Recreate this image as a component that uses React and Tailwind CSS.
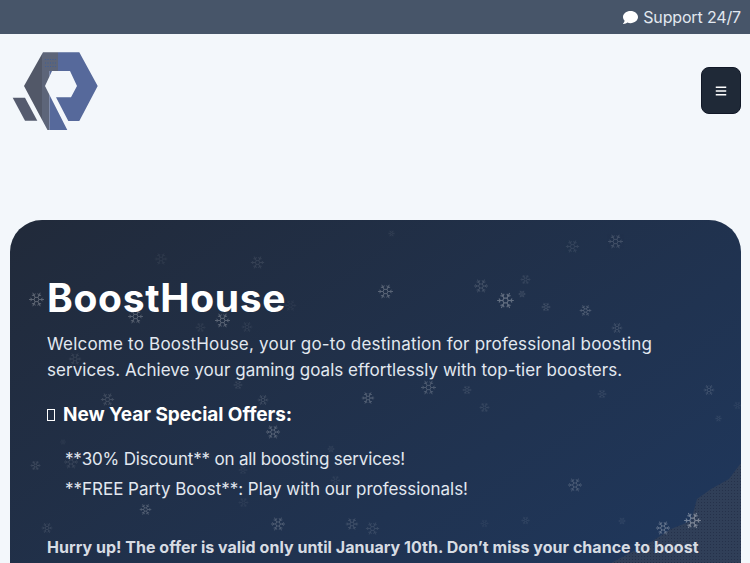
import React from "react";
import { Snowflake } from "lucide-react";
import { FaComment, FaBars } from "react-icons/fa";

const flakes = [
  [36,299,17,0.28],[135,316,17,0.24],[222,320,17,0.26],[75,359,14,0.1],[161,259,14,0.06],[257,262,15,0.1],
  [238,385,10,0.12],[200,327,11,0.08],[247,327,12,0.08],[290,305,13,0.05],[391,233,7,0.1],[385,291,17,0.26],
  [481,286,16,0.16],[505,300,19,0.3],[522,294,8,0.18],[546,307,10,0.18],[585,310,13,0.24],[617,328,12,0.16],
  [572,246,15,0.1],[615,241,17,0.15],[525,279,11,0.12],[428,387,17,0.2],[467,390,10,0.14],[484,407,11,0.12],
  [602,394,10,0.12],[709,390,12,0.16],[368,398,14,0.25],[107,399,15,0.16],[273,432,16,0.25],[63,442,6,0.08],
  [35,465,11,0.16],[71,462,16,0.1],[145,509,13,0.26],[278,524,16,0.22],[47,528,12,0.12],[352,524,14,0.16],
  [372,528,15,0.12],[331,449,8,0.1],[243,470,10,0.07],[243,502,11,0.07],[335,480,11,0.08],[575,485,16,0.2],
  [663,528,16,0.32],[692,520,19,0.38],[525,520,9,0.1],[622,521,8,0.1],[718,418,7,0.12],[737,405,9,0.08],
  [484,523,9,0.07],[263,400,12,0.16],[427,486,5,0.05],
];

function Logo() {
  return (
    <svg width="86" height="80" viewBox="12 52 86 80" className="block">
      <defs>
        <clipPath id="dark"><rect x="0" y="40" width="42" height="100" /></clipPath>
        <clipPath id="band"><path d="M42 40H58V71H49.5V140H42Z" /></clipPath>
        <clipPath id="blue"><path d="M58 40H110V140H49.5V71H58Z" /></clipPath>
      </defs>
      <polygon points="12.7,97.7 25,97.7 37.3,120.7 25,120.7" fill="#555b6e" />
      {["dark", "band", "blue"].map((id, i) => (
        <polygon
          key={id}
          clipPath={`url(#${id})`}
          fill={["#525868", "#5d6579", "#56699b"][i]}
          points="43,52.3 79.3,52.3 97.7,86 79.3,121 68.3,121 56,97.3 71,97.3 77,86 70,71 52,71 45,86 67.3,130 47.5,130 24,86"
        />
      ))}
      <g fill="#3f5f98">
        {[59, 62.5, 66].map((y) => [45, 47.5, 50, 52.5, 55].map((x) => <rect key={`${x}-${y}`} x={x} y={y} width="1" height="1" />))}
      </g>
    </svg>
  );
}

export default function App() {
  return (
    <div className="h-[563px] overflow-hidden bg-[#f3f7fb] font-['Inter','Liberation_Sans',sans-serif]">
      <div className="flex h-[34px] items-center justify-end gap-[5px] bg-[#475569] pr-[9px] text-[16px] text-[#e2e8f0]">
        <FaComment className="text-[15px] text-white" />
        <span className="tracking-[-0.15px]">Support 24/7</span>
      </div>
      <nav className="flex items-start justify-between pl-3 pr-[9px] pt-[18px] pb-[18px]">
        <Logo />
        <button className="mt-[15px] flex h-[47px] w-[40px] items-center justify-center rounded-lg border border-[#111827] bg-[#1f2937] text-white">
          <FaBars className="text-[12px]" />
        </button>
      </nav>
      <section className="relative mx-[9px] ml-[10px] mt-[70px] h-[500px] overflow-hidden rounded-t-[32px] bg-gradient-to-br from-[#212a3a] to-[#1e3a64] pl-[37px] pr-[37px] pt-[53px]">
        <svg className="absolute bottom-[157px] right-0" width="130" height="100" viewBox="0 0 130 100">
          <defs>
            <pattern id="dots" width="3" height="3" patternUnits="userSpaceOnUse">
              <rect width="3" height="3" fill="#303f58" />
              <rect width="1" height="1" fill="#25314a" />
            </pattern>
          </defs>
          <path d="M0 100 L40 79 L60 66 L80 58 L86 36 L100 26 L118 16 L130 0 V100Z" fill="url(#dots)" />
        </svg>
        {flakes.map(([x, y, s, o], i) => (
          <Snowflake
            key={i}
            size={s}
            strokeWidth={1.4}
            className="absolute text-white"
            style={{ left: x - 10 - s / 2, top: y - 220 - s / 2, opacity: o }}
          />
        ))}
        <div className="relative">
          <h1 className="text-[39px] font-bold leading-[50px] tracking-[0.7px] text-white">BoostHouse</h1>
          <p className="mt-[8px] text-[17px] leading-[26.4px] text-[#e2e8f0]">
            <span className="block whitespace-nowrap tracking-[0.21px]">Welcome to BoostHouse, your go-to destination for professional boosting</span>
            <span className="block whitespace-nowrap tracking-[0.04px]">services. Achieve your gaming goals effortlessly with top-tier boosters.</span>
          </p>
          <h2 className="mt-[18px] flex items-center text-[19px] font-bold leading-[26px] tracking-[-0.04px] text-white">
            <span className="mr-[8px] inline-block h-[12px] w-[8px] border-[1.5px] border-white" />
            New Year Special Offers:
          </h2>
          <ul className="mt-[16px] pl-[18px] text-[17px] text-[#e2e8f0]">
            <li className="whitespace-nowrap leading-[30px] tracking-[-0.18px]">**30% Discount** on all boosting services!</li>
            <li className="whitespace-nowrap leading-[30px] tracking-[-0.02px]">**FREE Party Boost**: Play with our professionals!</li>
          </ul>
          <p className="mt-[30px] whitespace-nowrap text-[16px] font-bold leading-[26px] tracking-[0.03px] text-[#d7dce3]">
            Hurry up! The offer is valid only until January 10th. Don’t miss your chance to boost
          </p>
        </div>
      </section>
    </div>
  );
}
